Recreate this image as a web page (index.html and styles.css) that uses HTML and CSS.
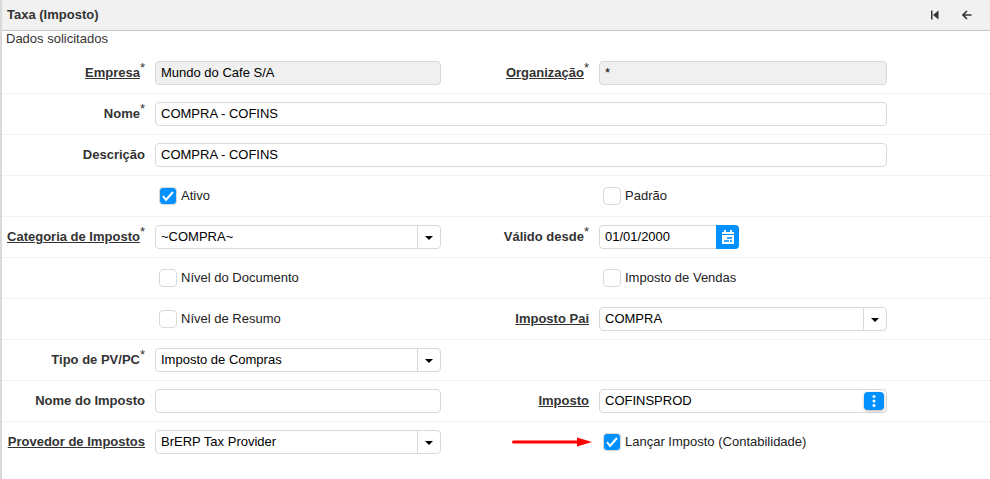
FILE: index.html
```html
<!DOCTYPE html>
<html lang="pt-BR">
<head>
    <meta charset="UTF-8">
    <meta name="viewport" content="width=device-width, initial-scale=1.0">
    <title>Taxa (Imposto)</title>
    <link rel="stylesheet" href="styles.css">
</head>
<body>
    <main class="window">
        <header class="toolbar">
            <h1>Taxa (Imposto)</h1>
            <div class="toolbar-actions">
                <button type="button" class="tool-btn" aria-label="Recolher">
                    <svg width="10" height="10" viewBox="0 0 10 10"><path d="M1 0.5h1.5v9H1zM8.5 0.5v9L3 5z" fill="#333"/></svg>
                </button>
                <button type="button" class="tool-btn" aria-label="Voltar">
                    <svg width="10" height="10" viewBox="0 0 10 10"><path d="M9.5 5H1M5 1L1 5l4 4" fill="none" stroke="#333" stroke-width="1.6"/></svg>
                </button>
            </div>
        </header>

        <p class="status">Dados solicitados</p>

        <form class="form">
            <div class="row">
                <div class="label"><label class="zoomable" for="empresa">Empresa</label><span class="required">*</span></div>
                <div class="field"><input type="text" id="empresa" class="box" value="Mundo do Cafe S/A" readonly></div>
                <div class="label"><label class="zoomable" for="organizacao">Organização</label><span class="required">*</span></div>
                <div class="field"><input type="text" id="organizacao" class="box" value="*" readonly></div>
            </div>

            <div class="row">
                <div class="label"><label for="nome">Nome</label><span class="required">*</span></div>
                <div class="field wide"><input type="text" id="nome" class="box" value="COMPRA - COFINS"></div>
            </div>

            <div class="row">
                <div class="label"><label for="descricao">Descrição</label></div>
                <div class="field wide"><input type="text" id="descricao" class="box" value="COMPRA - COFINS"></div>
            </div>

            <div class="row">
                <div class="label"></div>
                <div class="field"><label class="check"><input type="checkbox" checked>Ativo</label></div>
                <div class="label"></div>
                <div class="field"><label class="check"><input type="checkbox">Padrão</label></div>
            </div>

            <div class="row">
                <div class="label"><label class="zoomable" for="categoria">Categoria de Imposto</label><span class="required">*</span></div>
                <div class="field">
                    <select id="categoria" class="box">
                        <option>~COMPRA~</option>
                    </select>
                </div>
                <div class="label"><label for="valido">Válido desde</label><span class="required">*</span></div>
                <div class="field">
                    <div class="box date">
                        <input type="text" id="valido" value="01/01/2000">
                        <button type="button" class="date-btn" aria-label="Abrir calendário">
                            <svg width="14" height="14" viewBox="0 0 14 14">
                                <path d="M3 0h2v2h4V0h2v2h2v2H1V2h2zM1 5h12v9H1z" fill="#fff"/>
                                <path d="M6 7h5v2H6zM3 10h5v2H3zM9 10h2v2H9z" fill="#0090ff" opacity=".8"/>
                            </svg>
                        </button>
                    </div>
                </div>
            </div>

            <div class="row">
                <div class="label"></div>
                <div class="field"><label class="check"><input type="checkbox">Nível do Documento</label></div>
                <div class="label"></div>
                <div class="field"><label class="check"><input type="checkbox">Imposto de Vendas</label></div>
            </div>

            <div class="row">
                <div class="label"></div>
                <div class="field"><label class="check"><input type="checkbox">Nível de Resumo</label></div>
                <div class="label"><label class="zoomable" for="pai">Imposto Pai</label></div>
                <div class="field">
                    <select id="pai" class="box">
                        <option>COMPRA</option>
                    </select>
                </div>
            </div>

            <div class="row">
                <div class="label"><label for="tipo">Tipo de PV/PC</label><span class="required">*</span></div>
                <div class="field">
                    <select id="tipo" class="box">
                        <option>Imposto de Compras</option>
                    </select>
                </div>
            </div>

            <div class="row">
                <div class="label"><label for="nomeImposto">Nome do Imposto</label></div>
                <div class="field"><input type="text" id="nomeImposto" class="box"></div>
                <div class="label"><label class="zoomable" for="imposto">Imposto</label></div>
                <div class="field">
                    <div class="box search">
                        <input type="text" id="imposto" value="COFINSPROD">
                        <button type="button" class="search-btn" aria-label="Pesquisar">
                            <svg width="4" height="12" viewBox="0 0 4 12" fill="#fff"><circle cx="2" cy="1.5" r="1.5"/><circle cx="2" cy="6" r="1.5"/><circle cx="2" cy="10.5" r="1.5"/></svg>
                        </button>
                    </div>
                </div>
            </div>

            <div class="row">
                <div class="label"><label class="zoomable" for="provedor">Provedor de Impostos</label></div>
                <div class="field">
                    <select id="provedor" class="box">
                        <option>BrERP Tax Provider</option>
                    </select>
                </div>
                <div class="label pointer">
                    <svg width="80" height="10" viewBox="0 0 80 10" aria-hidden="true"><path d="M1.5 5H66" stroke="#f00" stroke-width="3" stroke-linecap="round"/><path d="M65 0.5L80 5L65 9.5z" fill="#f00"/></svg>
                </div>
                <div class="field"><label class="check"><input type="checkbox" checked>Lançar Imposto (Contabilidade)</label></div>
            </div>
        </form>
    </main>
</body>
</html>
```
FILE: styles.css
```css
* {
    box-sizing: border-box;
}
body {
    margin: 0;
    background: #fff;
    color: #333;
    font-family: "Liberation Sans", Arial, sans-serif;
    font-size: 13px;
    line-height: 16px;
}
input, select, button {
    font: inherit;
    color: #000;
}
button {
    display: flex;
    align-items: center;
    justify-content: center;
    padding: 0;
    border: none;
    cursor: pointer;
}
.window {
    min-height: 100vh;
    border-left: 2px solid #d9d9d9;
}

/* Title bar */
.toolbar {
    display: flex;
    align-items: center;
    justify-content: space-between;
    height: 31px;
    padding: 0 7px 0 5px;
    background: #f1f1f1;
    border-bottom: 1px solid #c5c5c5;
}
.toolbar h1 {
    margin: 0;
    font-size: 13px;
}
.toolbar-actions {
    display: flex;
}
.tool-btn {
    width: 32px;
    height: 28px;
    background: none;
}
.status {
    margin: 0;
    padding: 0 4px 6px;
}

/* Form grid */
.row {
    display: grid;
    grid-template-columns: 148fr 296fr 148fr 298fr 98fr;
    align-items: center;
    padding: 8px 0;
    border-bottom: 1px solid #f2f2f2;
}
.row:last-child {
    border-bottom: none;
}
.label {
    display: flex;
    justify-content: flex-end;
    padding: 0 5px;
    font-weight: bold;
    white-space: nowrap;
}
.zoomable {
    text-decoration: underline;
    cursor: pointer;
}
.required {
    font-weight: normal;
    line-height: 6px;
}
.pointer {
    padding-right: 2px;
}
.field {
    min-width: 0;
    padding: 0 5px;
}
.wide {
    grid-column: span 3;
}

/* Inputs */
.box {
    display: block;
    width: 100%;
    height: 24px;
    padding: 0 5px 1px;
    background-color: #fff;
    border: 1px solid #d9d9d9;
    border-radius: 4px;
}
.box[readonly] {
    background-color: #f0f0f0;
}
select.box {
    appearance: none;
    padding-right: 28px;
    background-image:
        url("data:image/svg+xml,%3Csvg xmlns='http://www.w3.org/2000/svg' width='8' height='4'%3E%3Cpath d='M0 0h8L4 4z'/%3E%3C/svg%3E"),
        linear-gradient(#d9d9d9, #d9d9d9);
    background-repeat: no-repeat;
    background-position: right 7px top 10px, right 22px top;
    background-size: 8px 4px, 1px 100%;
}
.date, .search {
    display: flex;
    align-items: center;
    padding: 0 0 0 5px;
}
.date input, .search input {
    flex: 1;
    min-width: 0;
    height: 22px;
    padding: 0 0 1px;
    border: none;
    background: none;
}
.date {
    width: 140px;
}
.date-btn {
    width: 23px;
    height: 24px;
    margin: -1px;
    background: #0090ff;
    border-radius: 0 4px 4px 0;
}
.search {
    padding-right: 2px;
}
.search-btn {
    width: 20px;
    height: 18px;
    background: #0090ff;
    border-radius: 4px;
    box-shadow: 0 1px 3px rgba(0, 0, 0, 0.3);
}

/* Checkboxes */
.check {
    display: flex;
    align-items: center;
    gap: 4px;
    height: 24px;
    padding-left: 4px;
    color: #222;
}
.check input {
    appearance: none;
    width: 18px;
    height: 18px;
    margin: 0;
    border: 1px solid #d9d9d9;
    border-radius: 4px;
    background: #fff;
}
.check input:checked {
    background: #0090ff url("data:image/svg+xml,%3Csvg xmlns='http://www.w3.org/2000/svg' width='16' height='16'%3E%3Cpath d='M3 8l3 4 7-8' fill='none' stroke='%23fff' stroke-width='2'/%3E%3C/svg%3E") center no-repeat;
}
```
